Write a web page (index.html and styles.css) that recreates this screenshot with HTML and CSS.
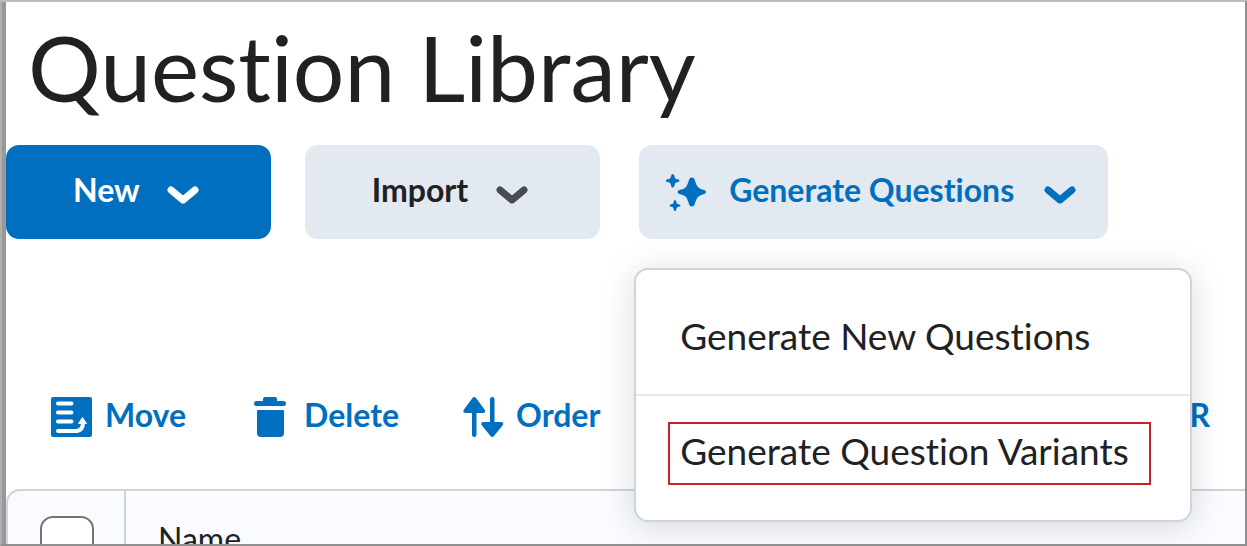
FILE: index.html
```html
<!DOCTYPE html>
<html lang="en">

<head>
  <meta charset="utf-8">
  <meta name="viewport" content="width=device-width, initial-scale=1">
  <title>Question Library</title>

  <link rel="stylesheet" href="styles.css">
</head>

<body>

  <main class="main-container">
    <h1>Question Library</h1>

    <div class="actions">
      <button class="btn btn-primary">
        New
        <svg class="chevron" viewBox="0 0 32 20"><path d="M4 5l12 10L28 5"/></svg>
      </button>
      <button class="btn btn-import">
        Import
        <svg class="chevron" viewBox="0 0 32 20"><path d="M4 5l12 10L28 5"/></svg>
      </button>

      <div class="dropdown">
        <button class="btn btn-generate" aria-expanded="true">
          <svg class="sparkle" viewBox="0 0 40 38">
            <path d="M25.800 4.500Q28.100 4.500 28.600 6.500Q30.500 13 32.500 14.500Q34 16 38 17Q40 17.500 40 19Q40 20.500 38 21Q34 22 32.500 23.500Q30.500 25 28.600 31.500Q28.100 33.500 25.800 33.500Q23.600 33.500 23.100 31.500Q21.200 25 19.500 23.500Q18 22 13.500 21Q11.500 20.500 11.500 19Q11.500 17.500 13.500 17Q18 16 19.500 14.500Q21.200 13 23.100 6.500Q23.600 4.500 25.800 4.500z"/>
            <path d="M6.700 1Q8 1 8.300 2.500Q8.800 5.300 10 5.900L12 6.300Q13.400 6.700 13.400 7.700Q13.400 8.800 12 9.100L10 9.600Q8.800 10.200 8.300 13Q8 14.500 6.700 14.500Q5.500 14.500 5.200 13Q4.700 10.200 3.500 9.600L1.400 9.100Q0 8.800 0 7.700Q0 6.700 1.400 6.300L3.500 5.900Q4.700 5.300 5.200 2.500Q5.500 1 6.700 1z"/>
            <path d="M9 27Q10 27 10.300 28.500Q10.600 30.600 11.500 31L13.500 31.400Q14.500 31.700 14.500 32.500Q14.500 33.300 13.500 33.600L11.500 34Q10.600 34.500 10.300 36.500Q10 38 9 38Q8 38 7.700 36.500Q7.400 34.500 6.500 34L4.500 33.600Q3.500 33.300 3.500 32.500Q3.500 31.700 4.500 31.400L6.500 31Q7.400 30.600 7.700 28.500Q8 27 9 27z"/>
          </svg>
          Generate Questions
          <svg class="chevron" viewBox="0 0 32 20"><path d="M4 5l12 10L28 5"/></svg>
        </button>

        <div class="menu">
          <button class="menu-item"><span>Generate New Questions</span></button>
          <button class="menu-item"><span class="highlight">Generate Question Variants</span></button>
        </div>
      </div>
    </div>

    <div class="toolbar">
      <button class="tool">
        <svg class="icon-move" viewBox="0 0 41 40">
          <rect width="41" height="40" rx="2"/>
          <path class="line" d="M7 6.500h13.500M7 15.500h13.500M7 24.500h13.500M7 34h19Q32 33 32 25.500"/>
          <path class="head" d="M31.500 20.500l4 6h-8z"/>
        </svg>
        Move
      </button>
      <button class="tool">
        <svg class="icon-delete" viewBox="0 0 32 40">
          <path d="M9 4V2Q9 0 11 0h10q2 0 2 2v2h7q2 0 2 2.500T30 9H2Q0 9 0 6.500T2 4z"/>
          <path d="M4 13h25q1 0 1 1v22q0 4-4 4H7q-4 0-4-4V14q0-1 1-1z"/>
        </svg>
        Delete
      </button>
      <button class="tool">
        <svg class="icon-order" viewBox="0 0 40 40">
          <path d="M9.500 1Q11 -1 13 1l8.500 11.500Q23.500 16 20 16h-6.500v22q0 2-2.200 2T9 38V16H2.500Q-1 16 1 12.500z"/>
          <path d="M27 2q0-2 2.200-2t2.300 2v23H38q3.500 0 1.500 3.500L31 39q-1.800 2-3.500 0L19 28.500Q17 25 20.500 25H27z"/>
        </svg>
        Order
      </button>
      <button class="tool tool-last">R</button>
    </div>

    <table class="questions">
      <thead>
        <tr>
          <th class="select-col"><input type="checkbox" aria-label="Select all"></th>
          <th>Name</th>
        </tr>
      </thead>
    </table>
  </main>

</body>

</html>
```

FILE: styles.css
```css
* {
  box-sizing: border-box;
}

html {
  height: 100%;
  border: 2px solid #8f8f8f;
  border-top-color: #bdbdbd;
  border-left-color: #b0b0b0;
  overflow: hidden;
}

body {
  height: 100%;
  margin: 0;
  border-left: 4px solid #989898;
  overflow: hidden;
  color: #202122;
  background-color: white;
  font-family: Lato, sans-serif;
  font-size: 32px;
  font-variant-ligatures: none;
}

h1 {
  margin: 0;
  padding: 11px 22px 24px;
  font-size: 91px;
  font-weight: 400;
  line-height: 108px;
}

button {
  border: none;
  padding: 0;
  background: none;
  color: inherit;
  font: inherit;
  font-variant-ligatures: none;
  white-space: nowrap;
  cursor: pointer;
}

svg {
  flex: none;
  fill: currentColor;
}

.actions {
  display: flex;
  gap: 34px;
}

.btn {
  display: flex;
  align-items: center;
  height: 94px;
  padding: 0 72px 6px 67px;
  border-radius: 13px;
  background-color: #e2e9f1;
  font-weight: 700;
}

.btn-primary {
  color: white;
  background-color: #006fbf;
}

.btn-generate {
  padding: 0 32px 6px 27px;
  color: #006fbf;
}

.chevron {
  width: 32px;
  height: 20px;
  margin: 12px 0 0 28px;
  fill: none;
  stroke: currentColor;
  stroke-width: 7;
  stroke-linecap: round;
  stroke-linejoin: round;
}

.btn-primary .chevron {
  margin-left: 27px;
}

.btn-import .chevron {
  color: #494c4e;
}

.btn-generate .chevron {
  margin-left: 30px;
}

.sparkle {
  width: 40px;
  height: 38px;
  margin: 6px 23px 0 0;
}

.dropdown {
  position: relative;
  margin-left: 5px;
}

.menu {
  position: absolute;
  top: 123px;
  left: -5px;
  width: 558px;
  border: 2px solid #cdd5dc;
  border-radius: 14px;
  background-color: white;
  box-shadow: 0 4px 32px rgba(0, 0, 0, 0.15);
}

.menu-item {
  display: flex;
  align-items: center;
  width: 100%;
  height: 124px;
  padding: 8px 32px 0;
  font-size: 37px;
  line-height: 44px;
}

.menu-item + .menu-item {
  height: 126px;
  padding-top: 0;
  padding-bottom: 10px;
  border-top: 2px solid #e3e9f1;
}

.menu-item span {
  padding: 0 12px;
}

.menu-item .highlight {
  padding: 5px 20px 10px 10px;
  border: 2px solid #cd2026;
}

.toolbar {
  display: flex;
  align-items: center;
  height: 250px;
  padding: 100px 35px 0 45px;
}

.tool {
  display: flex;
  align-items: center;
  margin-right: 64px;
  color: #006fbf;
  font-weight: 700;
}

.tool svg {
  margin: 6px 13px 0 0;
}

.tool-last {
  margin: 0 0 0 auto;
}

.icon-move {
  width: 41px;
  height: 40px;
}

.icon-move .line {
  fill: none;
  stroke: white;
  stroke-width: 4;
  stroke-linecap: round;
}

.icon-move .head {
  fill: white;
  stroke: white;
  stroke-linejoin: round;
}

.tool .icon-delete {
  width: 32px;
  height: 40px;
  margin-left: 4px;
  margin-right: 18px;
}

.icon-order {
  width: 40px;
  height: 40px;
}

.questions {
  width: calc(100% + 20px);
  border: 2px solid #cdd5dc;
  border-radius: 14px;
  border-spacing: 0;
  background-color: #f9fbff;
}

.questions th {
  height: 104px;
  padding: 0 32px 10px;
  font-weight: 400;
  text-align: left;
}

.questions .select-col {
  width: 118px;
  padding: 0 30px 0 32px;
  border-right: 2px solid #cdd5dc;
}

.questions input {
  display: block;
  width: 54px;
  height: 54px;
  margin: 0;
  border: 2px solid #6e7477;
  border-radius: 13px;
  background-color: white;
  appearance: none;
}
```
